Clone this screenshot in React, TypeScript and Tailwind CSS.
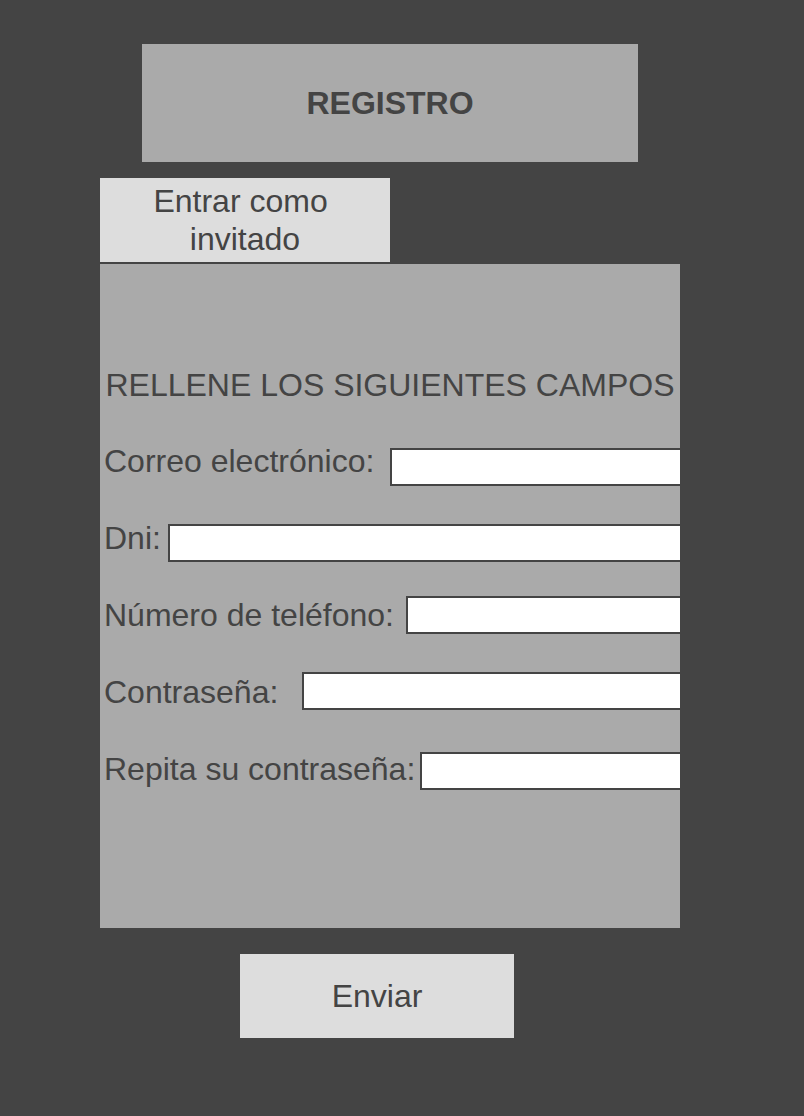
const fields = [
  { label: "Correo electrónico:", labelWidth: "w-[286px]", inputTop: "mt-[6px]" },
  { label: "Dni:", labelWidth: "w-[64px]", inputTop: "mt-[5px]" },
  { label: "Número de teléfono:", labelWidth: "w-[302px]", inputTop: "mt-0" },
  { label: "Contraseña:", labelWidth: "w-[198px]", inputTop: "-mt-px" },
  { label: "Repita su contraseña:", labelWidth: "w-[316px]", inputTop: "mt-[2px]" },
];

const App = () => {
  return (
    <div
      className="min-h-[1116px] w-full bg-[#444444] pt-[44px] text-[#444444] text-[32px] leading-[38px]"
      style={{ fontFamily: '"Liberation Sans", Arial, sans-serif' }}
    >
      <div className="ml-[142px] flex h-[118px] w-[496px] items-center justify-center bg-[#aaaaaa] font-bold">
        REGISTRO
      </div>

      <button className="ml-[100px] mt-[16px] flex h-[84px] w-[290px] items-center justify-center bg-[#dddddd] text-center">
        <span>
          Entrar como{"\u00a0"}
          <br />
          invitado
        </span>
      </button>

      <div className="ml-[100px] mt-[2px] h-[664px] w-[580px] bg-[#aaaaaa] pl-[4px] pt-[102px]">
        <h2 className="-ml-[4px] text-center whitespace-nowrap">RELLENE LOS SIGUIENTES CAMPOS</h2>
        <div className="mt-[38px] flex flex-col gap-[39px]">
          {fields.map((field) => (
            <div className="flex h-[38px] items-start" key={field.label}>
              <label className={`${field.labelWidth} shrink-0 whitespace-nowrap`}>{field.label}</label>
              <input
                type="text"
                className={`${field.inputTop} -mr-[2px] h-[38px] min-w-0 flex-1 border-2 border-[#444444] bg-white outline-none`}
              />
            </div>
          ))}
        </div>
      </div>

      <button className="ml-[240px] mt-[26px] flex h-[84px] w-[274px] items-center justify-center bg-[#dddddd]">
        Enviar
      </button>
    </div>
  );
};

export default App;
